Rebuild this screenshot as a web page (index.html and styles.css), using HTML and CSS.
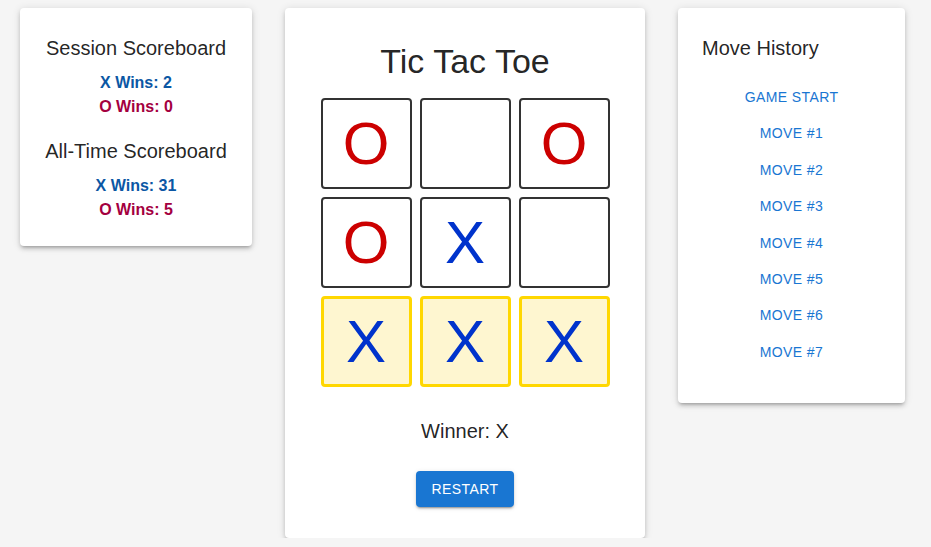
FILE: index.html
```
<!DOCTYPE html>
<html lang="en">
<head>
<meta charset="utf-8">
<title>Tic Tac Toe</title>
<link rel="stylesheet" href="styles.css">
</head>
<body>
<div class="layout">
  <section class="card score-card">
    <h2 class="card-title">Session Scoreboard</h2>
    <div class="wins x-wins">X Wins: 2</div>
    <div class="wins o-wins">O Wins: 0</div>
    <h2 class="card-title second">All-Time Scoreboard</h2>
    <div class="wins x-wins">X Wins: 31</div>
    <div class="wins o-wins">O Wins: 5</div>
  </section>

  <section class="card game-card">
    <h1 class="game-title">Tic Tac Toe</h1>
    <div class="board">
      <div class="cell o">O</div>
      <div class="cell"></div>
      <div class="cell o">O</div>
      <div class="cell o">O</div>
      <div class="cell x">X</div>
      <div class="cell"></div>
      <div class="cell x win">X</div>
      <div class="cell x win">X</div>
      <div class="cell x win">X</div>
    </div>
    <div class="status">Winner: X</div>
    <button class="restart">Restart</button>
  </section>

  <section class="card history-card">
    <h2 class="history-title">Move History</h2>
    <ul class="moves">
      <li><button class="move">Game Start</button></li>
      <li><button class="move">Move #1</button></li>
      <li><button class="move">Move #2</button></li>
      <li><button class="move">Move #3</button></li>
      <li><button class="move">Move #4</button></li>
      <li><button class="move">Move #5</button></li>
      <li><button class="move">Move #6</button></li>
      <li><button class="move">Move #7</button></li>
    </ul>
  </section>
</div>
</body>
</html>
```

FILE: styles.css
```
* { box-sizing: border-box; }

html, body {
  margin: 0;
  padding: 0;
  background: #f5f5f5;
  font-family: "Liberation Sans", Arial, sans-serif;
  color: rgba(0, 0, 0, 0.87);
}

.layout {
  display: flex;
  align-items: flex-start;
  gap: 33px;
  padding: 8px 0 0 20px;
}

.card {
  background: #fff;
  border-radius: 4px;
  box-shadow: 0 3px 3px -2px rgba(0,0,0,0.2), 0 3px 4px 0 rgba(0,0,0,0.14), 0 1px 8px 0 rgba(0,0,0,0.12);
}

.score-card {
  width: 232px;
  padding: 28px 12px 24px;
  text-align: center;
}

.card-title {
  margin: 0 0 11px;
  font-size: 20px;
  font-weight: 400;
  line-height: 24px;
}

.card-title.second {
  margin-top: 20px;
}

.wins {
  font-size: 16px;
  font-weight: 700;
  line-height: 24px;
}

.x-wins { color: #0b57a4; }
.o-wins { color: #a4003f; }

.game-card {
  width: 360px;
  padding: 32px 0 31px;
  display: flex;
  flex-direction: column;
  align-items: center;
}

.game-title {
  margin: 0 0 16px;
  font-size: 34px;
  font-weight: 400;
  line-height: 42px;
}

.board {
  display: grid;
  grid-template-columns: repeat(3, 91px);
  grid-auto-rows: 91px;
  gap: 8px;
}

.cell {
  border: 2px solid #333;
  border-radius: 4px;
  display: flex;
  align-items: center;
  justify-content: center;
  font-size: 60px;
  line-height: 1;
  background: #fff;
}

.cell.o { color: #cc0000; }
.cell.x { color: #0033cc; }

.cell.win {
  background: #fef6d0;
  border: 3px solid #ffd700;
}

.status {
  margin-top: 32px;
  font-size: 20px;
  line-height: 24px;
}

.restart {
  margin-top: 28px;
  height: 36px;
  padding: 0 16px;
  border: none;
  border-radius: 4px;
  background: #1976d2;
  color: #fff;
  font-family: "Liberation Sans", Arial, sans-serif;
  font-size: 14px;
  letter-spacing: 0.4px;
  text-transform: uppercase;
  box-shadow: 0 3px 1px -2px rgba(0,0,0,0.2), 0 2px 2px 0 rgba(0,0,0,0.14), 0 1px 5px 0 rgba(0,0,0,0.12);
}

.history-card {
  width: 227px;
  padding: 28px 24px 33px;
}

.history-title {
  margin: 0 0 19px;
  font-size: 20px;
  font-weight: 400;
  line-height: 24px;
}

.moves {
  list-style: none;
  margin: 0;
  padding: 0;
  display: flex;
  flex-direction: column;
  align-items: center;
}

.move {
  border: none;
  background: none;
  padding: 6px 8px;
  color: #1976d2;
  font-family: "Liberation Sans", Arial, sans-serif;
  font-size: 14px;
  line-height: 24.4px;
  letter-spacing: 0.4px;
  text-transform: uppercase;
}
```
